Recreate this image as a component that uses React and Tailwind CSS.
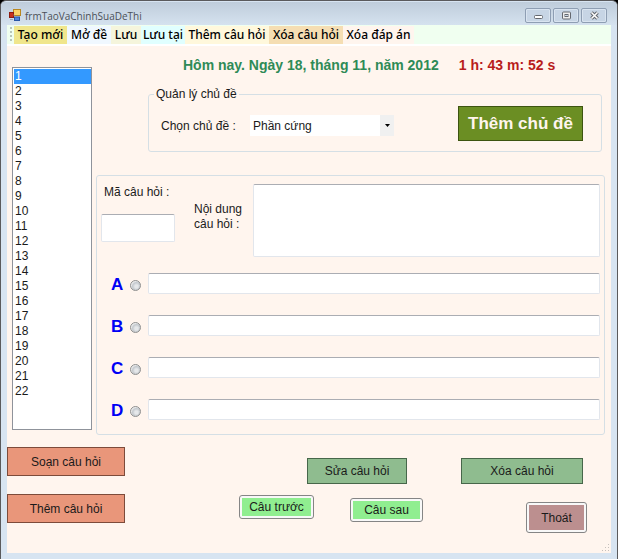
import React from "react";

const tools = [
  { text: "Tạo mới", style: "bg-[#f0e68c] w-[53px]" },
  { text: "Mở đề", style: "bg-[#f0f8ff] w-[44px]" },
  { text: "Lưu", style: "bg-[#f5f5dc] w-[30px]" },
  { text: "Lưu tại", style: "bg-[#e0ffff] w-[44px]" },
  { text: "Thêm câu hỏi", style: "bg-[#fff8dc] w-[84px]" },
  { text: "Xóa câu hỏi", style: "bg-[#f5deb3] w-[74px]" },
  { text: "Xóa đáp án", style: "bg-[#fff5ee] w-[71px]" },
];

const questions = Array.from({ length: 22 }, (_, i) => i + 1);
const answers = ["A", "B", "C", "D"];

const field =
  "rounded-[2px] border border-[#e2e6ec] border-t-[#abadb3] bg-white px-1 text-[12px] outline-none";
const flatButton = "border text-[12px] leading-4";
const raisedButton =
  "rounded-[3px] border border-[#858585] p-[2px] bg-[#f8f8f8] text-[12px] leading-4";

function AppIcon() {
  return (
    <svg width="12" height="13" viewBox="0 0 12 13" aria-hidden="true">
      <rect x="4.5" y="0.5" width="7" height="6" fill="#fbd468" stroke="#b88720" />
      <rect x="0.5" y="3.5" width="4" height="5" fill="#c8321e" stroke="#8e1c10" />
      <rect x="5.5" y="8" width="5" height="3.500" fill="#4f86dc" stroke="#2856a4" />
      <path d="M1 10.5h3M4.5 6h1" stroke="#9aa7b8" />
    </svg>
  );
}

function WindowButtons() {
  const box =
    "flex h-[15px] w-[26px] items-center justify-center rounded-[2px] border border-[#8e9eb3] bg-[#c7d5e5] shadow-[inset_0_0_0_1px_#d9e4f0]";
  return (
    <div className="flex gap-[2px]">
      <button className={box} aria-label="Minimize">
        <svg width="11" height="9" viewBox="0 0 11 9">
          <rect x="1.5" y="4.5" width="8" height="3" rx="1" fill="#fff" stroke="#64686f" />
        </svg>
      </button>
      <button className={box} aria-label="Maximize">
        <svg width="11" height="9" viewBox="0 0 11 9">
          <rect x="1.5" y="1" width="8" height="7" rx="1" fill="#eee" stroke="#64686f" />
          <rect x="4" y="3.5" width="3" height="2" fill="#c7d5e5" stroke="#64686f" />
        </svg>
      </button>
      <button className={box} aria-label="Close">
        <svg width="11" height="9" viewBox="0 0 11 9">
          <path d="M2.5 1.5l6 6M8.5 1.5l-6 6" stroke="#64686f" strokeWidth="3.6" />
          <path d="M2.5 1.5l6 6M8.5 1.5l-6 6" stroke="#fff" strokeWidth="1.5" />
        </svg>
      </button>
    </div>
  );
}

function TitleBar() {
  return (
    <header className="flex h-[23px] items-center justify-between bg-linear-to-b from-[#bfcddb] to-[#d5e2ef] pr-[10px] pl-[8px]">
      <div className="flex items-center gap-1 pt-1">
        <AppIcon />
        <h1 className="font-['Open_Sans',sans-serif] text-[10px] leading-4 text-[#4b5058]">
          frmTaoVaChinhSuaDeThi
        </h1>
      </div>
      <div className="pt-[4px]">
        <WindowButtons />
      </div>
    </header>
  );
}

function ToolBar() {
  return (
    <nav className="flex h-[21px] border-b-2 border-white bg-[#f0fff0] pt-px font-['Noto_Sans',sans-serif]">
      <div className="my-px ml-[3px] mr-[2px] w-[2px] bg-[repeating-linear-gradient(to_bottom,#b9c6b9_0_2px,transparent_2px_4px)]" />
      {tools.map((t) => (
        <button
          key={t.text}
          className={`${t.style} flex items-center justify-center text-[12px] leading-4 font-medium whitespace-nowrap text-black`}
        >
          {t.text}
        </button>
      ))}
    </nav>
  );
}

function TopicGroup() {
  return (
    <fieldset className="mt-[13px] ml-[52px] mr-[3px] rounded-[3px] border border-[#d5dfe5] pb-[10px] pl-3 pr-[18px]">
      <legend className="-ml-[7px] px-[2px] text-[12px] leading-[15px]">Quản lý chủ đề</legend>
      <div className="flex items-start pt-1">
        <label htmlFor="topic" className="mt-3 w-[89px] shrink-0 text-[12px] leading-4">
          Chọn chủ đề :
        </label>
        <div className="relative mt-[9px] w-[144px]">
          <select
            id="topic"
            className="block h-[21px] w-full appearance-none bg-white pl-[3px] text-[12px] outline-none"
          >
            <option>Phần cứng</option>
          </select>
          <span className="pointer-events-none absolute inset-y-0 right-0 flex w-[14px] items-center justify-center bg-[#f0f0f0]">
            <svg width="5" height="3" viewBox="0 0 5 3">
              <path d="M0 0h5L2.500 3z" fill="#000" />
            </svg>
          </span>
        </div>
        <button className="ml-auto h-[35px] w-[125px] border border-[#3d5410] bg-[#6b8e23] text-[17px] leading-5 font-bold whitespace-nowrap text-[#fff5ee]">
          Thêm chủ đề
        </button>
      </div>
    </fieldset>
  );
}

function QuestionGroup() {
  return (
    <section className="mt-[23px] rounded-[3px] border border-[#d5dfe5] pt-2 pr-1 pb-[14px] pl-1">
      <div className="flex items-start">
        <div className="w-[93px] shrink-0">
          <label htmlFor="code" className="block pl-[3px] text-[12px] leading-4">
            Mã câu hỏi :
          </label>
          <input id="code" className={`${field} mt-[14px] block h-[28px] w-[74px]`} />
        </div>
        <label htmlFor="content" className="mt-[18px] w-[59px] shrink-0 text-[12px] leading-[15px]">
          Nội dung
          <br />
          câu hỏi :
        </label>
        <textarea id="content" className={`${field} block h-[73px] min-w-0 flex-1 resize-none`} />
      </div>
      <div className="mt-4 flex flex-col gap-[21px]">
        {answers.map((a) => (
          <div key={a} className="flex items-start">
            <div className="flex h-[21px] w-[47px] shrink-0 items-center pt-[3px] pl-[10px]">
              <label
                htmlFor={`correct-${a}`}
                className="w-[19px] text-[17px] leading-[18px] font-bold text-[#0000f5]"
              >
                {a}
              </label>
              <input
                id={`correct-${a}`}
                type="radio"
                name="correct"
                className="size-[11px] appearance-none rounded-full border border-[#8e8f8f] bg-[radial-gradient(circle_at_60%_60%,#e6e8ea_0_20%,#c3c8cd_50%,#f0f0f0_70%)]"
              />
            </div>
            <input aria-label={`Đáp án ${a}`} className={`${field} h-[21px] min-w-0 flex-1`} />
          </div>
        ))}
      </div>
    </section>
  );
}

function Actions() {
  return (
    <div className="flex items-start pb-5">
      <div className="flex w-[118px] shrink-0 flex-col gap-[18px]">
        <button className={`${flatButton} h-[29px] border-[#7d4b3a] bg-[#e9967a]`}>
          Soạn câu hỏi
        </button>
        <button className={`${flatButton} h-[29px] border-[#7d4b3a] bg-[#e9967a]`}>
          Thêm câu hỏi
        </button>
      </div>
      <div className="flex-1 pt-[11px] pr-6">
        <div className="flex justify-end gap-[54px] pr-1">
          <button className={`${flatButton} h-[26px] w-[100px] border-[#47674a] bg-[#8fbc8f]`}>
            Sửa câu hỏi
          </button>
          <button className={`${flatButton} h-[26px] w-[122px] border-[#47674a] bg-[#8fbc8f]`}>
            Xóa câu hỏi
          </button>
        </div>
        <div className="flex items-start justify-end pt-[11px]">
          <button className={`${raisedButton} h-[24px] w-[75px]`}>
            <span className="flex h-full items-center justify-center bg-[#90ee90]">Câu trước</span>
          </button>
          <button className={`${raisedButton} mt-[3px] ml-9 h-[24px] w-[73px]`}>
            <span className="flex h-full items-center justify-center bg-[#90ee90]">Câu sau</span>
          </button>
          <button className={`${raisedButton} mt-[7px] ml-[103px] h-[31px] w-[61px]`}>
            <span className="flex h-full items-center justify-center bg-[#bc8f8f]">Thoát</span>
          </button>
        </div>
      </div>
    </div>
  );
}

function ResizeGrip() {
  return (
    <svg
      className="absolute right-px bottom-px"
      width="8"
      height="8"
      viewBox="0 0 8 8"
      fill="#c5c0bc"
      aria-hidden="true"
    >
      <path d="M6 0h1v1h-1zM3 3h1v1h-1zM6 3h1v1h-1zM0 6h1v1h-1zM3 6h1v1h-1zM6 6h1v1h-1z" />
    </svg>
  );
}

export default function App() {
  return (
    <div className="bg-black font-['Liberation_Sans',Arial,sans-serif] text-[#1a1a1a]">
      <div className="flex min-h-screen flex-col overflow-hidden rounded-t-[6px] border border-[#5a5a5c] bg-[#d7e4f1] pt-px">
        <TitleBar />
        <div className="relative mx-[6px] mb-[6px] flex flex-1 flex-col bg-[#fff5ee]">
          <ToolBar />
          <main>
            <div className="flex items-start pl-[5px] pr-[6px]">
              <select
                size={22}
                defaultValue="1"
                aria-label="Danh sách câu hỏi"
                className="mt-[21px] block h-[363px] w-[80px] shrink-0 overflow-hidden border border-[#8f939b] bg-white pt-px pl-px text-[12px] leading-[15px] outline-none"
              >
                {questions.map((n) => (
                  <option
                    key={n}
                    value={n}
                    className="h-[15px] min-h-[15px] p-0 pl-px leading-[15px] checked:bg-linear-to-b checked:from-[#3399ff] checked:to-[#3399ff] checked:[-webkit-text-fill-color:white]"
                  >
                    {n}
                  </option>
                ))}
              </select>
              <div className="ml-1 min-w-0 flex-1">
                <p className="flex gap-5 pt-[10px] pl-[87px] text-[14px] leading-[18px] font-bold whitespace-nowrap">
                  <span className="text-[#2e8b57]">Hôm nay. Ngày 18, tháng 11, năm 2012</span>
                  <span className="text-[#b81c1c]">1 h: 43 m: 52 s</span>
                </p>
                <TopicGroup />
                <QuestionGroup />
              </div>
            </div>
            <div className="mt-3">
              <Actions />
            </div>
          </main>
          <ResizeGrip />
        </div>
      </div>
    </div>
  );
}
